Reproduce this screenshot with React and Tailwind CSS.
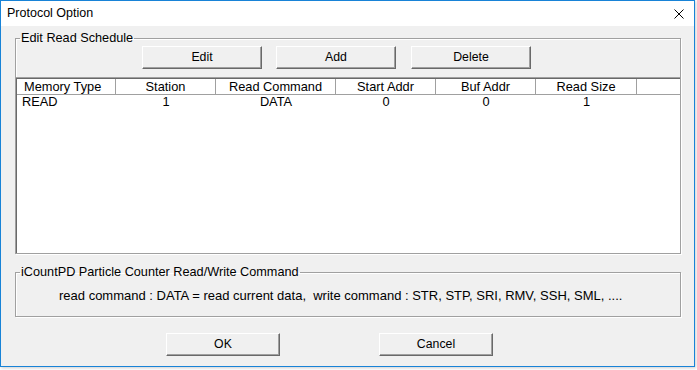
import React from "react";

const columns = [
  { label: "Memory Type", w: "w-[99px]", align: "text-left pl-[7px]" },
  { label: "Station", w: "w-[100px]", align: "text-center" },
  { label: "Read Command", w: "w-[120px]", align: "text-center" },
  { label: "Start Addr", w: "w-[100px]", align: "text-center" },
  { label: "Buf Addr", w: "w-[100px]", align: "text-center" },
  { label: "Read Size", w: "w-[101px]", align: "text-center" },
];

const rows = [["READ", "1", "DATA", "0", "0", "1"]];

const WinButton = ({ children, className = "" }) => (
  <button
    className={`h-[23px] bg-[#f0f0f0] border border-t-white border-l-white border-r-[#696969] border-b-[#696969] shadow-[inset_-1px_-1px_0_#a0a0a0] text-[12.3px] leading-none text-black ${className}`}
  >
    {children}
  </button>
);

const ListView = () => (
  <div className="-mx-[1px] -mb-[1px] mt-[8px] h-[177px] border border-[#a0a0a0] bg-white shadow-[inset_1px_1px_0_#696969] pl-[1px] pt-[1px]">
    <div className="flex h-[16px] border-b border-[#a0a0a0]">
      {columns.map((c) => (
        <div
          key={c.label}
          className={`${c.w} ${c.align} shrink-0 border-r border-[#a0a0a0] text-[12.8px] leading-[15px]`}
        >
          {c.label}
        </div>
      ))}
      <div className="flex-1" />
    </div>
    {rows.map((r, i) => (
      <div key={i} className="flex h-[13px]">
        {r.map((v, j) => (
          <div
            key={j}
            className={`${columns[j].w} shrink-0 text-[12.8px] leading-[13px] ${
              j === 0 ? "pl-[5px] text-left" : "text-center"
            }`}
          >
            {v}
          </div>
        ))}
      </div>
    ))}
  </div>
);

export default function App() {
  return (
    <div
      className="w-[697px] h-[370px] bg-white text-black"
      style={{ fontFamily: '"Liberation Sans", Arial, sans-serif' }}
    >
      <div className="w-[695px] h-[367px] border border-[#1883d7] flex flex-col shadow-[1px_1px_3px_rgba(0,0,0,0.2)]">
        {/* title bar */}
        <div className="h-[25px] bg-white flex items-center justify-between pl-[6px] pr-[10px]">
          <span className="text-[12.5px] -mt-[1px]">Protocol Option</span>
          <svg width="10" height="10" viewBox="0 0 10 10">
            <path d="M0.5 0.5 L9.5 9.5 M9.5 0.5 L0.5 9.5" stroke="#000" strokeWidth="1" />
          </svg>
        </div>

        <div className="flex-1 bg-[#f0f0f0] pl-[14px] flex flex-col">
          <fieldset className="mt-[5px] w-[666px] border border-[#a0a0a0] shadow-[inset_1px_1px_0_#fff,1px_1px_0_#fff]">
            <legend className="ml-[4px] px-[1px] text-[12.7px] leading-[15px]">Edit Read Schedule</legend>
            <div className="flex pl-[126px]">
              <WinButton className="w-[120px]">Edit</WinButton>
              <WinButton className="w-[120px] ml-[14px]">Add</WinButton>
              <WinButton className="w-[120px] ml-[15px]">Delete</WinButton>
            </div>
            <ListView />
          </fieldset>

          <fieldset className="mt-[11px] w-[666px] h-[52px] border border-[#a0a0a0] shadow-[inset_1px_1px_0_#fff,1px_1px_0_#fff]">
            <legend className="ml-[4px] px-[1px] text-[12.7px] leading-[15px]">
              iCountPD Particle Counter Read/Write Command
            </legend>
            <div className="pl-[43px] pt-[8px] text-[13px] leading-[15px] whitespace-pre">
              {"read command : DATA = read current data,  write command : STR, STP, SRI, RMV, SSH, SML, ...."}
            </div>
          </fieldset>

          <div className="flex mt-[16px] pl-[151px]">
            <WinButton className="w-[114px]">OK</WinButton>
            <WinButton className="w-[114px] ml-[99px]">Cancel</WinButton>
          </div>
        </div>
      </div>
    </div>
  );
}
